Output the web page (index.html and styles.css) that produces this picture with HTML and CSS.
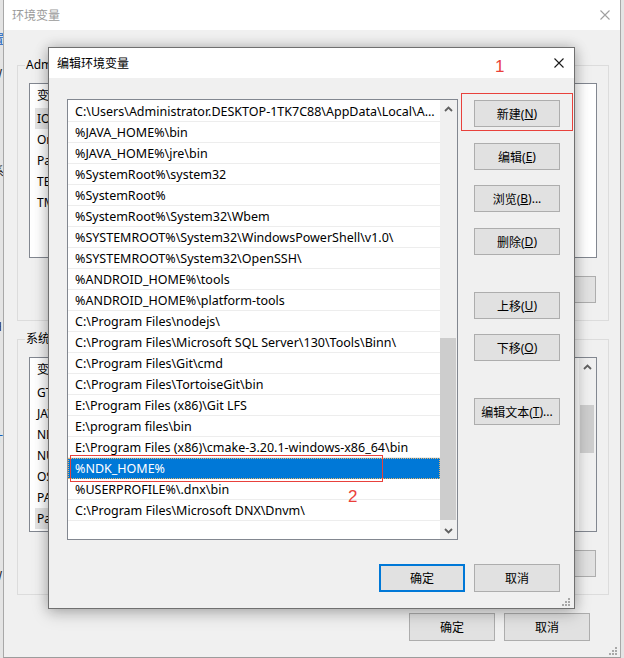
FILE: index.html
```html
<!DOCTYPE html>
<html lang="zh-CN">
<head>
<meta charset="utf-8">
<title>编辑环境变量</title>
<link rel="stylesheet" href="styles.css">
</head>
<body>
<div class="screen">
  <div class="edge">
    <span class="cut cut-a">置</span>
    <span class="cut cut-b">W</span>
    <span class="cut cut-c">系</span>
    <span class="cut cut-d">H</span>
    <span class="cut cut-e">计</span>
    <span class="cut cut-f">W</span>
  </div>

  <div class="bgwin">
    <div class="bg-title">
      <span>环境变量</span>
      <svg class="x-icon" width="10" height="10" viewBox="0 0 10 10"><path d="M0.5 0.5L9.5 9.5M9.5 0.5L0.5 9.5" stroke="#a0a0a0" stroke-width="1.1" fill="none"/></svg>
    </div>
    <div class="bg-body">
      <fieldset class="group group-user">
        <legend>Administrator 的用户变量(<u>U</u>)</legend>
        <div class="vlist">
          <div class="vcols">
            <div class="vhdr">变量</div>
            <div class="vrow sel">IOT_HOME</div>
            <div class="vrow">OneDrive</div>
            <div class="vrow">Path</div>
            <div class="vrow">TEMP</div>
            <div class="vrow">TMP</div>
          </div>
        </div>
        <div class="bg-btns">
          <button class="btn">新建(<u>N</u>)...</button>
          <button class="btn">编辑(<u>E</u>)...</button>
          <button class="btn">删除(<u>D</u>)</button>
        </div>
      </fieldset>

      <fieldset class="group group-sys">
        <legend>系统变量(<u>S</u>)</legend>
        <div class="vlist">
          <div class="vcols">
            <div class="vhdr">变量</div>
            <div class="vrow">GTK_BASEPATH</div>
            <div class="vrow">JAVA_HOME</div>
            <div class="vrow">NDK_HOME</div>
            <div class="vrow">NUMBER_OF_PROCESSORS</div>
            <div class="vrow">OS</div>
            <div class="vrow">PATHEXT</div>
            <div class="vrow sel">Path</div>
          </div>
          <div class="bscroll">
            <div class="sarrow">
              <svg width="9" height="6" viewBox="0 0 9 6"><polyline points="1,5 4.5,1.5 8,5" fill="none" stroke="#606060" stroke-width="1.8"/></svg>
            </div>
            <div class="bthumb"></div>
          </div>
        </div>
        <div class="bg-btns">
          <button class="btn">新建(<u>W</u>)...</button>
          <button class="btn">编辑(<u>I</u>)...</button>
          <button class="btn">删除(<u>L</u>)</button>
        </div>
      </fieldset>

      <div class="bg-foot">
        <button class="btn btn-tall">确定</button>
        <button class="btn btn-tall">取消</button>
      </div>
    </div>
    <svg class="grip grip-bg" width="9" height="9" viewBox="0 0 9 9"><g fill="#a8a8a8"><rect x="6" y="0" width="2" height="2"/><rect x="3" y="3" width="2" height="2"/><rect x="6" y="3" width="2" height="2"/><rect x="0" y="6" width="2" height="2"/><rect x="3" y="6" width="2" height="2"/><rect x="6" y="6" width="2" height="2"/></g></svg>
  </div>

  <div class="dlg">
    <div class="dlg-title">
      <span>编辑环境变量</span>
      <svg class="x-icon" width="10" height="10" viewBox="0 0 10 10"><path d="M0.5 0.5L9.5 9.5M9.5 0.5L0.5 9.5" stroke="#1a1a1a" stroke-width="1.1" fill="none"/></svg>
    </div>
    <div class="dlg-body">
      <div class="dlg-main">
        <div class="plist">
          <div class="prows">
            <div class="prow">C:\Users\Administrator.DESKTOP-1TK7C88\AppData\Local\A...</div>
            <div class="prow">%JAVA_HOME%\bin</div>
            <div class="prow">%JAVA_HOME%\jre\bin</div>
            <div class="prow">%SystemRoot%\system32</div>
            <div class="prow">%SystemRoot%</div>
            <div class="prow">%SystemRoot%\System32\Wbem</div>
            <div class="prow">%SYSTEMROOT%\System32\WindowsPowerShell\v1.0\</div>
            <div class="prow">%SYSTEMROOT%\System32\OpenSSH\</div>
            <div class="prow">%ANDROID_HOME%\tools</div>
            <div class="prow">%ANDROID_HOME%\platform-tools</div>
            <div class="prow">C:\Program Files\nodejs\</div>
            <div class="prow">C:\Program Files\Microsoft SQL Server\130\Tools\Binn\</div>
            <div class="prow">C:\Program Files\Git\cmd</div>
            <div class="prow">C:\Program Files\TortoiseGit\bin</div>
            <div class="prow">E:\Program Files (x86)\Git LFS</div>
            <div class="prow">E:\program files\bin</div>
            <div class="prow">E:\Program Files (x86)\cmake-3.20.1-windows-x86_64\bin</div>
            <div class="prow sel">%NDK_HOME%</div>
            <div class="prow">%USERPROFILE%\.dnx\bin</div>
            <div class="prow">C:\Program Files\Microsoft DNX\Dnvm\</div>
          </div>
          <div class="pscroll">
            <div class="sarrow">
              <svg width="9" height="6" viewBox="0 0 9 6"><polyline points="1,5 4.5,1.5 8,5" fill="none" stroke="#606060" stroke-width="1.8"/></svg>
            </div>
            <div class="pthumb"></div>
            <div class="sarrow sarrow-down">
              <svg width="9" height="6" viewBox="0 0 9 6"><polyline points="1,1 4.5,4.5 8,1" fill="none" stroke="#606060" stroke-width="1.8"/></svg>
            </div>
          </div>
        </div>
        <div class="side">
          <button class="btn s-new">新建(<u>N</u>)</button>
          <button class="btn s-edit">编辑(<u>E</u>)</button>
          <button class="btn s-browse">浏览(<u>B</u>)...</button>
          <button class="btn s-del">删除(<u>D</u>)</button>
          <button class="btn s-up">上移(<u>U</u>)</button>
          <button class="btn s-down">下移(<u>O</u>)</button>
          <button class="btn s-text">编辑文本(<u>T</u>)...</button>
        </div>
      </div>
      <div class="dlg-foot">
        <button class="btn btn-tall btn-default">确定</button>
        <button class="btn btn-tall">取消</button>
      </div>
    </div>
    <svg class="grip grip-dlg" width="9" height="9" viewBox="0 0 9 9"><g fill="#a8a8a8"><rect x="6" y="0" width="2" height="2"/><rect x="3" y="3" width="2" height="2"/><rect x="6" y="3" width="2" height="2"/><rect x="0" y="6" width="2" height="2"/><rect x="3" y="6" width="2" height="2"/><rect x="6" y="6" width="2" height="2"/></g></svg>
  </div>

  <div class="mark mark-box-1"></div>
  <div class="mark mark-box-2"></div>
  <span class="mark-num mark-num-1">1</span>
  <span class="mark-num mark-num-2">2</span>
</div>
</body>
</html>
```

FILE: styles.css
```css
* { box-sizing: border-box; }
html, body { margin: 0; padding: 0; }
body {
  width: 624px;
  height: 658px;
  overflow: hidden;
  background: #e4e4e4;
  font-family: "Noto Sans", "Noto Sans CJK SC", sans-serif;
  font-size: 12px;
  color: #000;
}
u { text-decoration: underline; text-underline-offset: 1px; }

.screen {
  position: relative;
  display: flex;
  width: 624px;
  height: 658px;
}

/* partial glyphs at the far left edge */
.edge {
  width: 3px;
  flex: none;
  display: flex;
  flex-direction: column;
}
.cut {
  display: block;
  height: 16px;
  line-height: 16px;
  font-size: 12px;
  white-space: nowrap;
  color: #222;
}
.cut-a { margin-top: 32px; margin-left: -8px; color: #1560c0; }
.cut-b { margin-top: 18px; margin-left: -9px; }
.cut-c { margin-top: 82px; margin-left: -8px; }
.cut-d { margin-top: 139px; margin-left: -7px; }
.cut-e { margin-top: 95px; margin-left: -9px; color: #1560c0; }
.cut-f { margin-top: 122px; margin-left: -9px; }

/* background window */
.bgwin {
  position: relative;
  width: 618px;
  height: 658px;
  flex: none;
  background: #f0f0f0;
  border-left: 1px solid #a8a8a8;
  border-right: 1px solid #a8a8a8;
  border-bottom: 1px solid #9c9c9c;
  display: flex;
  flex-direction: column;
}
.bg-title {
  height: 30px;
  flex: none;
  background: #fff;
  color: #9a9a9a;
  display: flex;
  align-items: center;
  justify-content: space-between;
  padding: 0 10px 0 8px;
}
.x-icon { display: block; }
.bg-body {
  flex: 1;
  padding-left: 13px;
  display: flex;
  flex-direction: column;
}
.group {
  width: 592px;
  margin: 0;
  border: 1px solid #dcdcdc;
  padding: 10px 11px 17px 11px;
  min-width: 0;
}
.group-user { margin-top: 27px; }
.group-sys { margin-top: 10px; }
.group legend {
  font-size: 12px;
  line-height: 16px;
  padding: 0 1px;
  margin-left: -4px;
  color: #000;
}
.vlist {
  height: 175px;
  background: #fff;
  border: 1px solid #828790;
  display: flex;
}
.vcols { flex: 1; }
.vhdr {
  height: 24px;
  line-height: 24px;
  padding-left: 7px;
}
.vrow {
  width: 160px;
  height: 21px;
  line-height: 21px;
  margin-left: 5px;
  padding-left: 2px;
  white-space: nowrap;
  overflow: hidden;
}
.vrow.sel { background: #e3e3e3; }
.bscroll {
  width: 17px;
  flex: none;
  background: #f0f0f0;
  display: flex;
  flex-direction: column;
}
.bthumb {
  margin: 30px 2px 0 1px;
  height: 48px;
  background: #cdcdcd;
}
.sarrow {
  height: 17px;
  flex: none;
  display: flex;
  align-items: center;
  justify-content: center;
}
.sarrow svg { display: block; }
.sarrow-down { margin-top: auto; }

.bg-btns {
  display: flex;
  justify-content: flex-end;
  gap: 9px;
  margin-top: 18px;
  padding-right: 1px;
}
.bg-foot {
  display: flex;
  justify-content: flex-end;
  gap: 9px;
  margin: 18px 30px 0 0;
}

/* buttons */
.btn {
  width: 86px;
  height: 27px;
  padding: 0;
  margin: 0;
  border: 1px solid #adadad;
  background: #e1e1e1;
  font-family: "Noto Sans", "Noto Sans CJK SC", sans-serif;
  font-size: 12px;
  color: #000;
  display: flex;
  align-items: center;
  justify-content: center;
  flex: none;
}
.btn-tall { height: 28px; }
.btn-default { border: 2px solid #0078d7; }

.grip { position: absolute; display: block; }
.grip-bg { right: 2px; bottom: 1px; }
.grip-dlg { right: 3px; bottom: 1px; }

/* foreground dialog */
.dlg {
  position: absolute;
  left: 48px;
  top: 47px;
  width: 527px;
  height: 562px;
  background: #f0f0f0;
  border: 1px solid #707070;
  box-shadow: 0 0 12px rgba(0, 0, 0, 0.22), 0 5px 16px rgba(0, 0, 0, 0.18);
  display: flex;
  flex-direction: column;
}
.dlg-title {
  height: 30px;
  flex: none;
  background: #fff;
  display: flex;
  align-items: center;
  justify-content: space-between;
  padding: 0 10px 0 8px;
}
.dlg-body {
  flex: 1;
  padding: 21px 14px 16px 18px;
  display: flex;
  flex-direction: column;
}
.dlg-main {
  display: flex;
  gap: 16px;
}
.plist {
  width: 391px;
  height: 441px;
  flex: none;
  background: #fff;
  border: 1px solid #828790;
  display: flex;
}
.prows {
  flex: 1;
  min-width: 0;
  padding-top: 1px;
  overflow: hidden;
}
.prow {
  height: 21px;
  line-height: 22px;
  padding-left: 7px;
  border-bottom: 1px solid #ededed;
  white-space: nowrap;
  overflow: hidden;
  font-size: 12.5px;
}
.prow.sel {
  background: #0078d7;
  color: #fff;
  border-bottom-color: #0078d7;
  outline: 1px dotted #e9b56b;
  outline-offset: -1px;
}
.pscroll {
  width: 17px;
  flex: none;
  background: #f0f0f0;
  display: flex;
  flex-direction: column;
}
.pthumb {
  margin: 221px 1px 0 0;
  height: 182px;
  background: #cdcdcd;
}

.side {
  display: flex;
  flex-direction: column;
  padding-top: 1px;
}
.s-edit { margin-top: 16px; }
.s-browse { margin-top: 15px; }
.s-del { margin-top: 16px; }
.s-up { margin-top: 37px; }
.s-down { margin-top: 15px; }
.s-text { margin-top: 37px; }

.dlg-foot {
  display: flex;
  justify-content: flex-end;
  gap: 9px;
  margin-top: 24px;
}

/* red annotations */
.mark {
  position: absolute;
  border: 1px solid #e8413c;
}
.mark-box-1 { left: 461px; top: 93px; width: 112px; height: 38px; }
.mark-box-2 { left: 70px; top: 455px; width: 313px; height: 27px; }
.mark-num {
  position: absolute;
  color: #ea3f3a;
  font-family: "Liberation Sans", sans-serif;
  font-size: 17px;
  line-height: 17px;
}
.mark-num-1 { left: 495px; top: 58px; }
.mark-num-2 { left: 348px; top: 488px; }
```
